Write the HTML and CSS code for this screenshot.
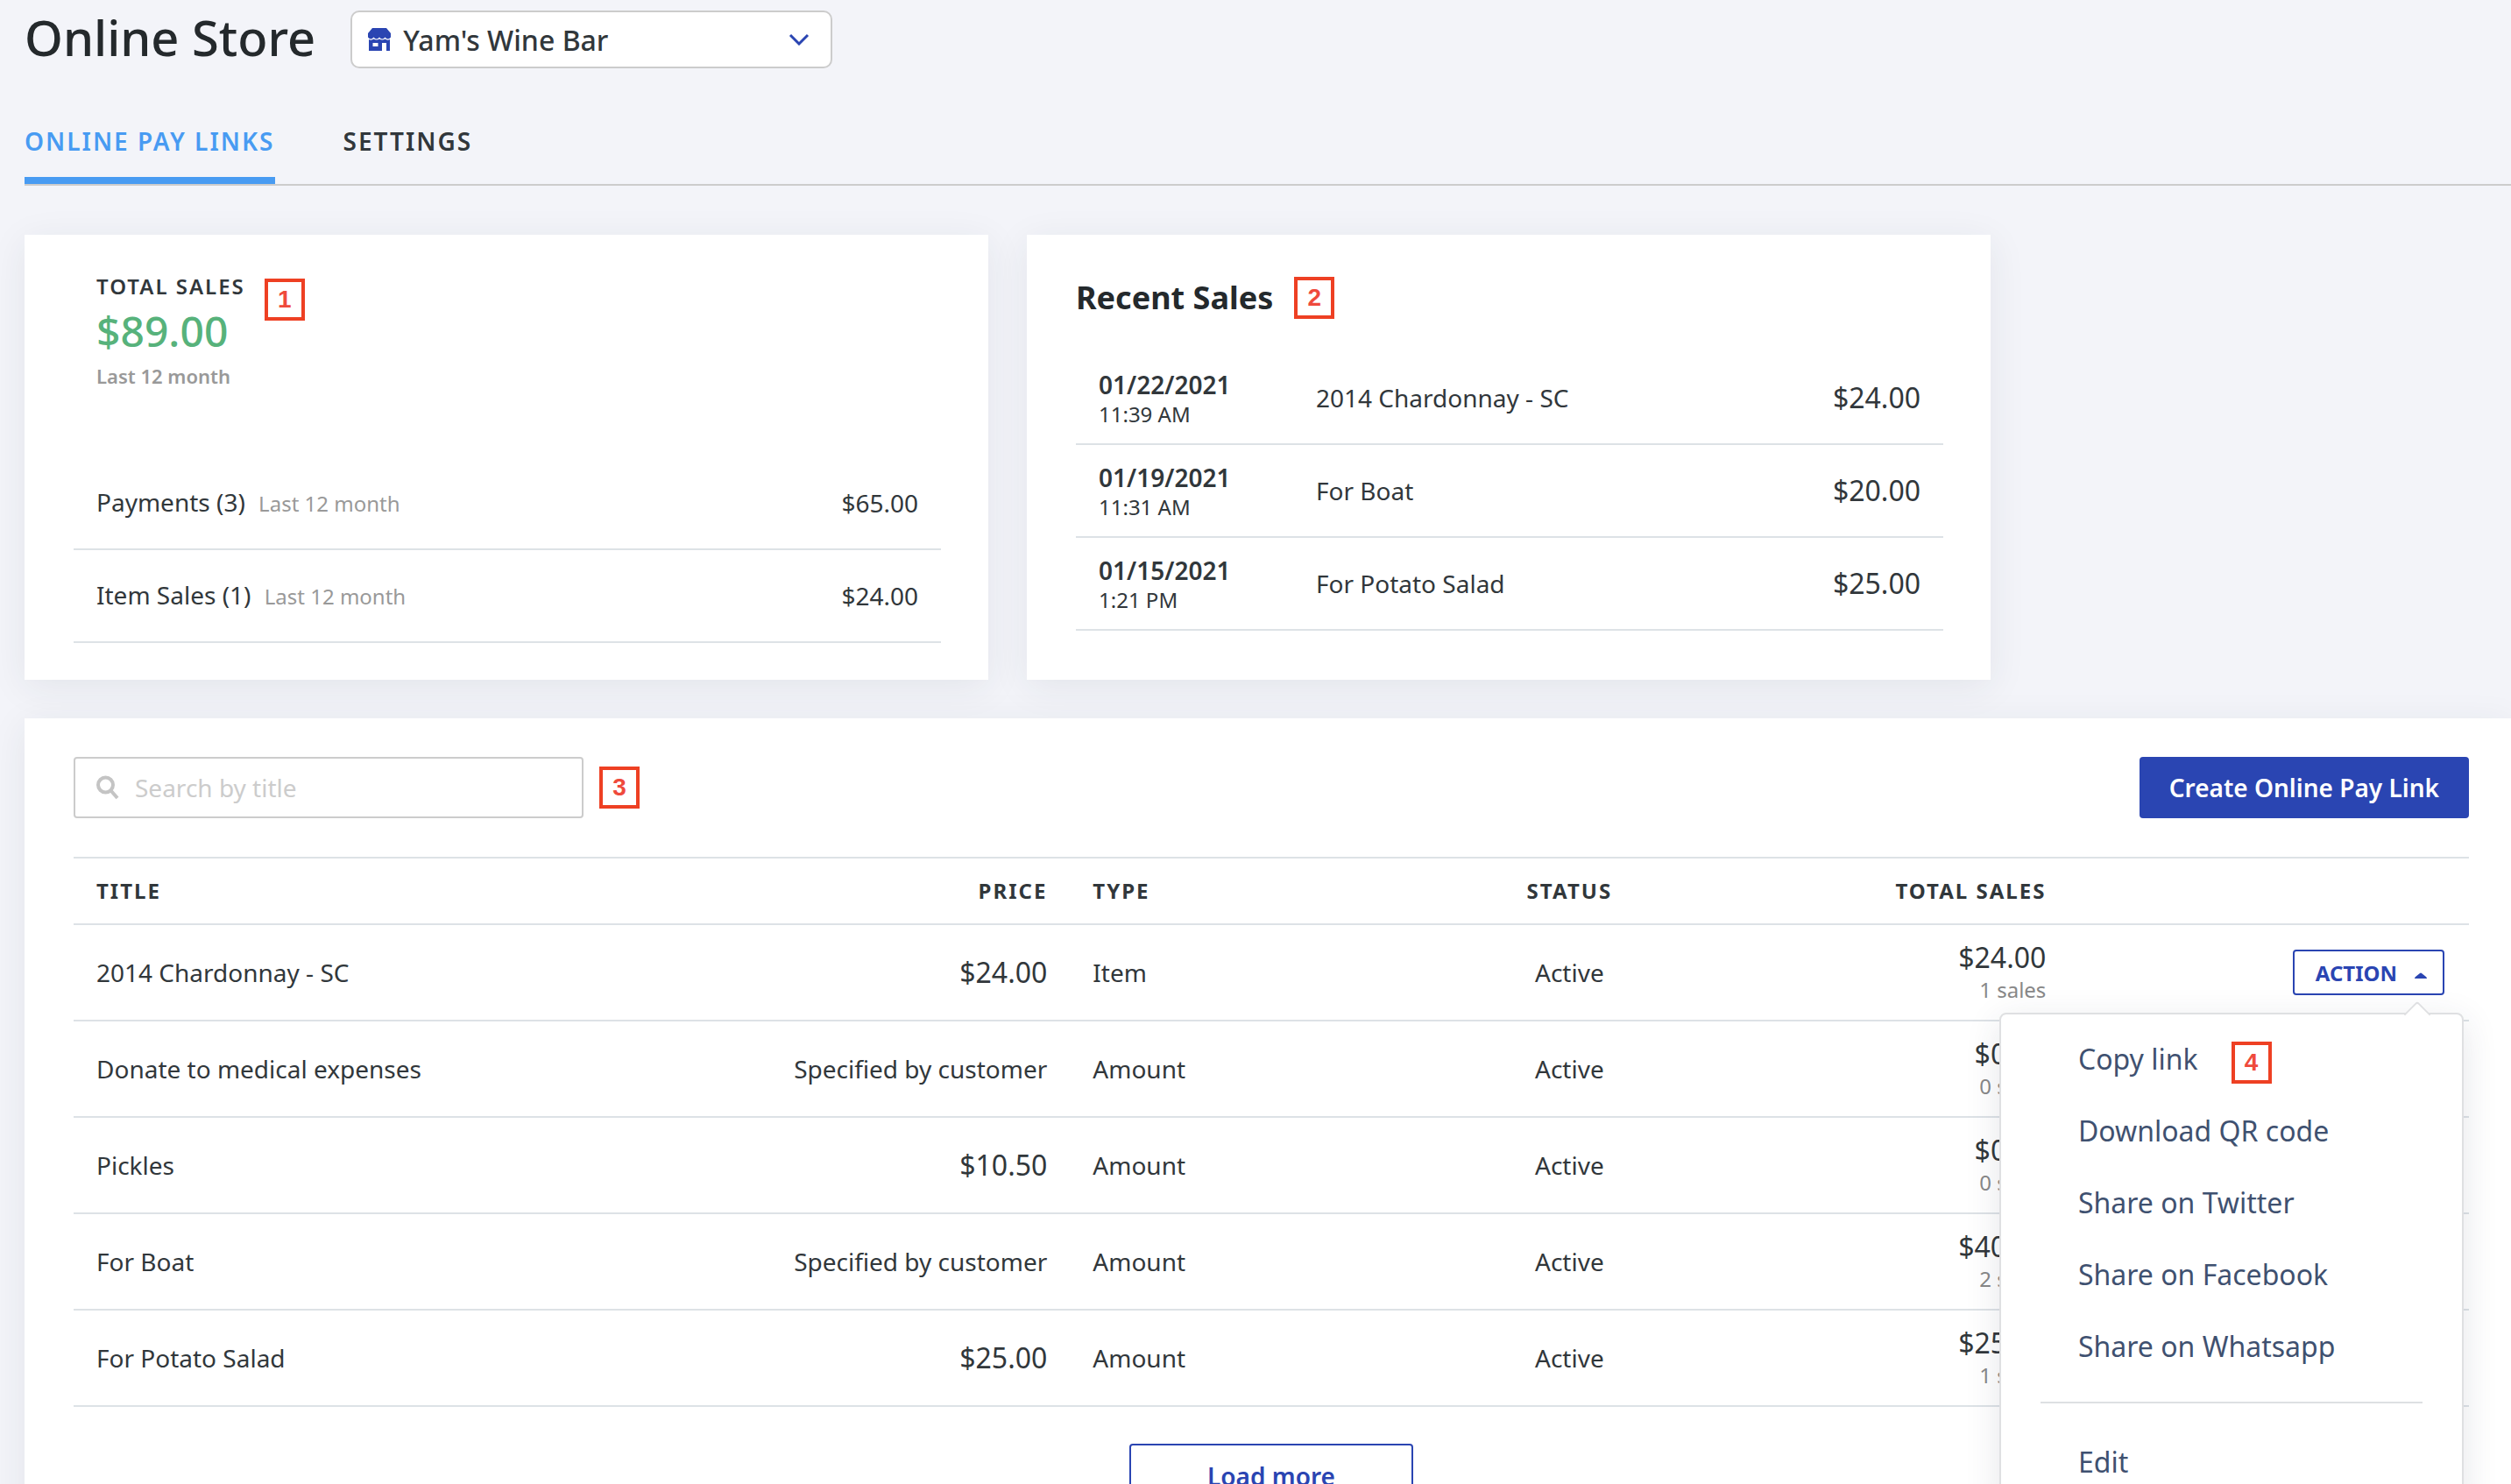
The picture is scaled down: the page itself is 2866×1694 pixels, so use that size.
FILE: index.html
```html
<!DOCTYPE html>
<html lang="en">
<head>
  <meta charset="UTF-8" />
  <meta name="viewport" content="width=device-width, initial-scale=1" />
  <title>Online Store</title>
  <link rel="stylesheet" href="styles.css">
</head>
<body>

  <header class="page-header">
    <h1>Online Store</h1>
    <div class="store-picker">
      <svg class="store-icon" viewBox="0 0 26 26" aria-hidden="true">
        <path d="M5 0h16l5 6v4.500q-1.500 2-3.250 2t-3.250-2q-1.500 2-3.250 2t-3.250-2q-1.500 2-3.250 2t-3.250-2q-1.500 2-3.250 2T0 10.500V6z"/>
        <path fill-rule="evenodd" d="M1 13q3 1.500 5.500-.500 3.250 2 6.500 0 3.250 2 6.500 0Q22 14.500 25 13v13h-4v-9h-5v9H1zM5.500 17v4h6v-4z"/>
      </svg>
      <select aria-label="Store">
        <option>Yam's Wine Bar</option>
      </select>
      <svg class="chevron" viewBox="0 0 24 14" aria-hidden="true"><path d="M2 2l10 10L22 2"/></svg>
    </div>
  </header>

  <nav class="tabs">
    <a class="tab active" href="#links">ONLINE PAY LINKS</a>
    <a class="tab" href="#settings">SETTINGS</a>
  </nav>

  <main>
    <section class="cards">
      <div class="card">
        <div class="summary">
          <div>
            <div class="summary-label">TOTAL SALES</div>
            <div class="summary-total">$89.00</div>
            <div class="summary-period">Last 12 month</div>
          </div>
          <span class="marker">1</span>
        </div>
        <table class="card-table">
          <tbody>
            <tr>
              <td>Payments (3) <span class="period">Last 12 month</span></td>
              <td class="right">$65.00</td>
            </tr>
            <tr>
              <td>Item Sales (1) <span class="period">Last 12 month</span></td>
              <td class="right">$24.00</td>
            </tr>
          </tbody>
        </table>
      </div>

      <div class="card">
        <div class="card-title">
          <h2>Recent Sales</h2>
          <span class="marker">2</span>
        </div>
        <table class="card-table recent">
          <tbody>
            <tr>
              <td class="when"><strong>01/22/2021</strong><small>11:39 AM</small></td>
              <td>2014 Chardonnay - SC</td>
              <td class="right money">$24.00</td>
            </tr>
            <tr>
              <td class="when"><strong>01/19/2021</strong><small>11:31 AM</small></td>
              <td>For Boat</td>
              <td class="right money">$20.00</td>
            </tr>
            <tr>
              <td class="when"><strong>01/15/2021</strong><small>1:21 PM</small></td>
              <td>For Potato Salad</td>
              <td class="right money">$25.00</td>
            </tr>
          </tbody>
        </table>
      </div>
    </section>

    <section class="panel" id="links">
      <div class="toolbar">
        <label class="search">
          <svg viewBox="0 0 26 28" aria-hidden="true"><circle cx="10.500" cy="11" r="8.500"/><path d="M17 18l7 8"/></svg>
          <input type="text" placeholder="Search by title" aria-label="Search by title" />
        </label>
        <span class="marker">3</span>
        <button class="btn-primary" type="button">Create Online Pay Link</button>
      </div>

      <table class="links-table">
        <thead>
          <tr>
            <th class="col-title">TITLE</th>
            <th class="col-price right">PRICE</th>
            <th class="col-type">TYPE</th>
            <th class="col-status center">STATUS</th>
            <th class="col-total right">TOTAL SALES</th>
            <th></th>
          </tr>
        </thead>
        <tbody>
          <tr>
            <td>2014 Chardonnay - SC</td>
            <td class="right money">$24.00</td>
            <td>Item</td>
            <td class="center">Active</td>
            <td class="right"><div class="total">$24.00</div><div class="count">1 sales</div></td>
            <td class="right">
              <div class="action">
                <button class="btn-action" type="button" aria-expanded="true">ACTION
                  <svg viewBox="0 0 14 7" aria-hidden="true"><path d="M0 7q0-1 1-2l5-4q1-1 2 0l5 4q1 1 1 2z"/></svg>
                </button>
                <div class="menu">
                  <a href="#copy">Copy link <span class="marker">4</span></a>
                  <a href="#qr">Download QR code</a>
                  <a href="#twitter">Share on Twitter</a>
                  <a href="#facebook">Share on Facebook</a>
                  <a href="#whatsapp">Share on Whatsapp</a>
                  <hr />
                  <a href="#edit">Edit</a>
                </div>
              </div>
            </td>
          </tr>
          <tr>
            <td>Donate to medical expenses</td>
            <td class="right">Specified by customer</td>
            <td>Amount</td>
            <td class="center">Active</td>
            <td class="right"><div class="total">$0.00</div><div class="count">0 sales</div></td>
            <td></td>
          </tr>
          <tr>
            <td>Pickles</td>
            <td class="right money">$10.50</td>
            <td>Amount</td>
            <td class="center">Active</td>
            <td class="right"><div class="total">$0.00</div><div class="count">0 sales</div></td>
            <td></td>
          </tr>
          <tr>
            <td>For Boat</td>
            <td class="right">Specified by customer</td>
            <td>Amount</td>
            <td class="center">Active</td>
            <td class="right"><div class="total">$40.00</div><div class="count">2 sales</div></td>
            <td></td>
          </tr>
          <tr>
            <td>For Potato Salad</td>
            <td class="right money">$25.00</td>
            <td>Amount</td>
            <td class="center">Active</td>
            <td class="right"><div class="total">$25.00</div><div class="count">1 sales</div></td>
            <td></td>
          </tr>
        </tbody>
      </table>

      <button class="btn-more" type="button">Load more</button>
    </section>
  </main>

</body>
</html>
```
FILE: styles.css
```css
* {
  box-sizing: border-box;
}

html {
  scrollbar-width: none;
}

body {
  margin: 0;
  padding: 12px 0 0 28px;
  min-height: 100vh;
  background: #f3f4f9;
  color: #31373b;
  font-family: "Noto Sans", sans-serif;
  font-size: 28px;
  line-height: 40px;
}

button, input, select {
  font-family: inherit;
}

h1, h2 {
  margin: 0;
  color: #24292c;
}

h1 {
  font-size: 56px;
  font-weight: 500;
  line-height: 60px;
}

h2 {
  font-size: 36px;
  font-weight: 700;
  line-height: 60px;
}

/* header */
.page-header {
  display: flex;
  align-items: flex-start;
  gap: 40px;
}

.store-picker {
  display: flex;
  align-items: center;
  gap: 14px;
  width: 550px;
  height: 66px;
  padding: 0 24px 0 18px;
  background: #fff;
  border: 2px solid #ccc;
  border-radius: 10px;
}

.store-picker select {
  flex: 1;
  height: 100%;
  padding: 0;
  border: none;
  outline: none;
  appearance: none;
  background: transparent;
  color: #31373b;
  font-size: 32px;
  font-weight: 500;
}

.store-icon {
  width: 26px;
  height: 26px;
  fill: #2a45b2;
}

.chevron {
  width: 24px;
  height: 14px;
  fill: none;
  stroke: #2a45b2;
  stroke-width: 3;
}

.tabs {
  display: flex;
  gap: 78px;
  margin-top: 63px;
  border-bottom: 2px solid #ccc;
}

.tab {
  padding-bottom: 21px;
  border-bottom: 8px solid transparent;
  color: #31373b;
  font-weight: 600;
  letter-spacing: 2px;
  text-decoration: none;
}

.tab.active {
  color: #489bf2;
  border-color: #489bf2;
}

/* numbered red squares */
.marker {
  flex: none;
  display: inline-flex;
  align-items: center;
  justify-content: center;
  width: 46px;
  height: 48px;
  border: 4px solid #ee4023;
  color: #ef4a3c;
  font-family: "Liberation Sans", sans-serif;
  font-size: 28px;
  font-weight: 700;
  line-height: 40px;
}

/* cards */
.cards {
  display: flex;
  gap: 44px;
  margin: 56px 0 44px;
}

.card, .panel {
  background: #fff;
  box-shadow: 0 8px 40px rgba(40, 50, 70, 0.08);
}

.card {
  flex: 0 1 1100px;
  padding: 42px 54px 42px 56px;
}

.summary {
  display: flex;
  gap: 22px;
  padding-left: 26px;
  margin-bottom: 76px;
}

.summary .marker {
  margin-top: 8px;
}

.summary-label {
  font-size: 24px;
  font-weight: 600;
  letter-spacing: 2px;
  line-height: 34px;
}

.summary-total {
  color: #57b27b;
  font-size: 48px;
  font-weight: 500;
  line-height: 68px;
}

.summary-period {
  color: #999;
  font-size: 22px;
  font-weight: 600;
  line-height: 34px;
}

.card-title {
  display: flex;
  align-items: center;
  gap: 24px;
  margin-bottom: 32px;
}

.right {
  text-align: right;
}

.center {
  text-align: center;
}

.money, .total {
  font-size: 32px;
}

table {
  width: 100%;
  border-collapse: separate;
  border-spacing: 0;
}

th, td {
  padding: 0 26px;
  border-bottom: 2px solid #dde2e6;
}

.card-table td {
  height: 106px;
}

.period {
  margin-left: 8px;
  color: #999;
  font-size: 24px;
}

.card-table .when {
  width: 248px;
  padding: 4px 0 0 26px;
}

.when strong, .when small {
  display: block;
  line-height: 34px;
}

.when strong {
  font-weight: 600;
}

.when small {
  font-size: 24px;
}

/* pay links */
.panel {
  padding: 44px 48px 44px 56px;
}

.toolbar {
  display: flex;
  align-items: center;
  gap: 18px;
  margin-bottom: 44px;
}

.search {
  display: flex;
  align-items: center;
  gap: 18px;
  width: 582px;
  height: 70px;
  padding: 0 24px;
  border: 2px solid #ccc;
  border-radius: 4px;
}

.search svg {
  width: 26px;
  height: 28px;
  fill: none;
  stroke: #c4c4c4;
  stroke-width: 4;
}

.search input {
  flex: 1;
  min-width: 0;
  padding: 0;
  border: none;
  outline: none;
  font-size: 28px;
}

.search input::placeholder {
  color: #ccc;
}

.btn-primary {
  margin-left: auto;
  height: 70px;
  padding: 0 34px;
  background: #2a45b2;
  border: none;
  border-radius: 4px;
  color: #fff;
  font-size: 28px;
  font-weight: 600;
}

.links-table {
  table-layout: fixed;
}

.links-table th {
  height: 78px;
  border-top: 2px solid #dde2e6;
  font-size: 24px;
  font-weight: 700;
  letter-spacing: 2px;
  text-align: left;
}

.links-table th.right {
  text-align: right;
}

.links-table th.center {
  text-align: center;
}

.links-table td {
  height: 110px;
}

.links-table td:last-child {
  padding-right: 28px;
}

.col-title {
  width: 21%;
}

.col-price {
  width: 20.6%;
}

.col-type, .col-status, .col-total {
  width: 13.9%;
}

.count {
  color: #888;
  font-size: 24px;
  line-height: 34px;
}

.action {
  display: inline-block;
  position: relative;
}

.btn-action {
  display: flex;
  align-items: center;
  gap: 20px;
  height: 52px;
  padding: 0 18px 0 24px;
  background: #fff;
  border: 2px solid #2a45b2;
  border-radius: 4px;
  color: #2a45b2;
  font-size: 24px;
  font-weight: 700;
}

.btn-action svg {
  width: 14px;
  height: 7px;
  margin-top: 6px;
  fill: #2a45b2;
}

.menu {
  position: absolute;
  top: 72px;
  right: -22px;
  z-index: 1;
  width: 530px;
  padding: 10px 0;
  background: #fff;
  border: 2px solid #dfe0e2;
  border-radius: 8px;
  box-shadow: 0 10px 40px rgba(40, 50, 70, 0.12);
  text-align: left;
}

/* little arrow under the action button */
.menu::before {
  content: "";
  position: absolute;
  top: -11px;
  right: 40px;
  width: 20px;
  height: 20px;
  background: #fff;
  border-top: 2px solid #dfe0e2;
  border-left: 2px solid #dfe0e2;
  border-top-left-radius: 4px;
  transform: rotate(45deg);
}

.menu a {
  display: flex;
  align-items: center;
  gap: 38px;
  height: 82px;
  padding-left: 88px;
  color: #3f5170;
  font-size: 32px;
  text-decoration: none;
}

.menu .marker {
  margin-top: 8px;
}

.menu hr {
  margin: 22px 45px 26px;
  border: none;
  border-top: 2px solid #dde0e3;
}

.btn-more {
  display: block;
  width: 324px;
  height: 74px;
  margin: 42px auto 0;
  background: #fff;
  border: 2px solid #2a45b2;
  border-radius: 4px;
  color: #2a45b2;
  font-size: 28px;
  font-weight: 600;
}
```
